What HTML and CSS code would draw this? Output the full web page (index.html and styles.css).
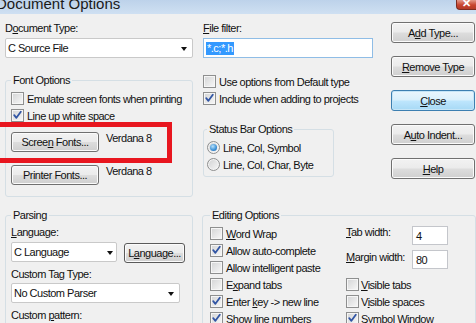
FILE: index.html
```html
<!DOCTYPE html>
<html>
<head>
<meta charset="utf-8">
<title>Document Options</title>
<link rel="stylesheet" href="styles.css">
</head>
<body>
<div class="titlebar"><span class="title">Document Options</span><span class="close">✕</span></div>

<div class="top">
  <div class="col-left">
    <div class="label">D<u>o</u>cument Type:</div>
    <div class="combo combo-doc"><span>C Source File</span><i class="arrow"></i></div>
    <fieldset class="group font-options">
      <legend>Font Options</legend>
      <div class="cbrow"><span class="cb"></span><span>Emulate screen fonts when printing</span></div>
      <div class="cbrow"><span class="cb"><svg viewBox="0 0 11 11" width="11" height="11"><path d="M2.2 5.2 L4.4 7.8 L8.8 1.8" fill="none" stroke="#3155a4" stroke-width="1.8" stroke-linecap="round" stroke-linejoin="round"/></svg></span><span>Line up white space</span></div>
      <div class="fontrow"><span class="btn btn-font"><span>Scree<u>n</u> Fonts...</span></span><span class="fontname">Verdana 8</span></div>
      <div class="fontrow second"><span class="btn btn-font"><span>Printer Fonts...</span></span><span class="fontname">Verdana 8</span></div>
    </fieldset>
  </div>

  <div class="col-mid">
    <div class="label"><u>F</u>ile filter:</div>
    <div class="textbox filter"><span class="sel">*.c;*.h</span></div>
    <div class="cbrow first-mid"><span class="cb"></span><span>Use options from Default type</span></div>
    <div class="cbrow"><span class="cb"><svg viewBox="0 0 11 11" width="11" height="11"><path d="M2.2 5.2 L4.4 7.8 L8.8 1.8" fill="none" stroke="#3155a4" stroke-width="1.8" stroke-linecap="round" stroke-linejoin="round"/></svg></span><span>Include when adding to projects</span></div>
    <fieldset class="group status">
      <legend>Status Bar Options</legend>
      <div class="cbrow"><span class="rb on"></span><span>Line, Col, S<u>y</u>mbol</span></div>
      <div class="cbrow"><span class="rb"></span><span>Line, Col, Char, Byte</span></div>
    </fieldset>
  </div>

  <div class="col-right">
    <span class="btn btn-side"><span>A<u>d</u>d Type...</span></span>
    <span class="btn btn-side"><span><u>R</u>emove Type</span></span>
    <span class="btn btn-side default"><span><u>C</u>lose</span></span>
    <span class="btn btn-side"><span>A<u>u</u>to Indent...</span></span>
    <span class="btn btn-side"><span><u>H</u>elp</span></span>
  </div>
</div>

<div class="bottom">
  <fieldset class="group parsing">
    <legend>Parsing</legend>
    <div class="label"><u>L</u>anguage:</div>
    <div class="langrow">
      <div class="combo combo-lang"><span>C Language</span><i class="arrow"></i></div>
      <span class="btn btn-lang"><span>L<u>a</u>nguage...</span></span>
    </div>
    <div class="label tag-label">Custom Tag Type:</div>
    <div class="combo combo-tag"><span>No Custom Parser</span><i class="arrow"></i></div>
    <div class="label pattern-label">Custom <u>p</u>attern:</div>
  </fieldset>

  <fieldset class="group editing">
    <legend>Editing Options</legend>
    <div class="edit-cols">
      <div class="edit-col1">
        <div class="cbrow"><span class="cb"></span><span><u>W</u>ord Wrap</span></div>
        <div class="cbrow"><span class="cb"><svg viewBox="0 0 11 11" width="11" height="11"><path d="M2.2 5.2 L4.4 7.8 L8.8 1.8" fill="none" stroke="#3155a4" stroke-width="1.8" stroke-linecap="round" stroke-linejoin="round"/></svg></span><span>Allow auto-complete</span></div>
        <div class="cbrow"><span class="cb"></span><span>Allow intelligent paste</span></div>
        <div class="cbrow"><span class="cb"></span><span>E<u>x</u>pand tabs</span></div>
        <div class="cbrow"><span class="cb"><svg viewBox="0 0 11 11" width="11" height="11"><path d="M2.2 5.2 L4.4 7.8 L8.8 1.8" fill="none" stroke="#3155a4" stroke-width="1.8" stroke-linecap="round" stroke-linejoin="round"/></svg></span><span>Enter <u>k</u>ey -&gt; new line</span></div>
        <div class="cbrow"><span class="cb"><svg viewBox="0 0 11 11" width="11" height="11"><path d="M2.2 5.2 L4.4 7.8 L8.8 1.8" fill="none" stroke="#3155a4" stroke-width="1.8" stroke-linecap="round" stroke-linejoin="round"/></svg></span><span>Show line numbers</span></div>
      </div>
      <div class="edit-col2">
        <div class="field tab-field"><span class="flabel"><u>T</u>ab width:</span><span class="textbox small">4</span></div>
        <div class="field margin-field"><span class="flabel"><u>M</u>argin width:</span><span class="textbox small">80</span></div>
        <div class="cbrow col2-first"><span class="cb"></span><span><u>V</u>isible tabs</span></div>
        <div class="cbrow"><span class="cb"></span><span>V<u>i</u>sible spaces</span></div>
        <div class="cbrow"><span class="cb"><svg viewBox="0 0 11 11" width="11" height="11"><path d="M2.2 5.2 L4.4 7.8 L8.8 1.8" fill="none" stroke="#3155a4" stroke-width="1.8" stroke-linecap="round" stroke-linejoin="round"/></svg></span><span><u>S</u>ymbol Window</span></div>
      </div>
    </div>
  </fieldset>
</div>

<div class="highlight"></div>
</body>
</html>
```

FILE: styles.css
```css
* { box-sizing: border-box; }
html, body { margin: 0; padding: 0; }
body {
  position: relative;
  width: 476px;
  height: 323px;
  overflow: hidden;
  background: #f0f0f0;
  font-family: "Liberation Sans", Arial, sans-serif;
  font-size: 11px;
  line-height: 14px;
  letter-spacing: -0.5px;
  color: #111;
}
u { text-decoration: underline; text-underline-offset: 1px; }

/* title bar */
.titlebar {
  height: 14px;
  display: flex;
  overflow: hidden;
  background: linear-gradient(#bdd2ea, #cfe0f2);
}
.title {
  font-size: 15px;
  line-height: 13px;
  letter-spacing: 0;
  margin: -3px 0 0 -4px;
  color: #1a1a1a;
}
.close {
  margin-left: auto;
  width: 20px;
  height: 10px;
  background: linear-gradient(#e39a8a, #c8452f 55%, #b53a26);
  border: 1px solid #7d2c20;
  border-top: 0;
  border-right: 0;
  border-radius: 0 0 0 4px;
  color: #fff;
  font-size: 11px;
  line-height: 6px;
  font-weight: bold;
  text-align: center;
  letter-spacing: 0;
}

/* generic */
.label { height: 14px; white-space: nowrap; }
.group {
  margin: 0;
  padding: 3px 0 0 5px;
  border: 1px solid #d5dfe5;
  border-radius: 3px;
  min-width: 0;
}
.group legend { padding: 0 2px; line-height: 14px; }

.cbrow { display: flex; align-items: center; height: 17px; gap: 3px; white-space: nowrap; }
.cb {
  flex: none;
  width: 13px;
  height: 13px;
  border: 1px solid #8e8f8f;
  background: linear-gradient(135deg, #d3d4d5, #f8f8f8);
  box-shadow: inset 0 0 0 1px #f6f6f6;
  display: flex;
  align-items: center;
  justify-content: center;
}
.cb svg { display: block; }
.rb {
  flex: none;
  width: 13px;
  height: 13px;
  border: 1px solid #8e8f8f;
  border-radius: 50%;
  background: linear-gradient(135deg, #d0d1d2, #f8f8f8);
  box-shadow: inset 0 0 0 1px #f4f4f4;
  display: flex;
  align-items: center;
  justify-content: center;
}
.rb.on::after {
  content: "";
  width: 7px;
  height: 7px;
  border-radius: 50%;
  background: radial-gradient(circle at 40% 35%, #b8e1fa, #3a8fd6 60%, #1d5fa8);
}

.btn {
  display: flex;
  align-items: center;
  justify-content: center;
  border: 1px solid #707070;
  border-radius: 3px;
  background: linear-gradient(#f2f2f2 0%, #ebebeb 48%, #dddddd 52%, #cfcfcf 100%);
  box-shadow: inset 0 0 0 1px #fbfbfb;
  white-space: nowrap;
}

.combo {
  display: flex;
  align-items: center;
  justify-content: space-between;
  height: 20px;
  background: #fff;
  border: 1px solid #c9c9c9;
  border-radius: 2px;
  padding: 0 5px 0 2px;
  white-space: nowrap;
}
.arrow {
  width: 0;
  height: 0;
  border-left: 3.5px solid transparent;
  border-right: 3.5px solid transparent;
  border-top: 4px solid #111;
  margin-top: 2px;
}
.textbox {
  display: flex;
  align-items: center;
  background: #fff;
  border: 1px solid #abadb3;
}

/* top section */
.top { display: flex; padding: 7px 0 0 5px; }
.col-left { width: 188px; flex: none; }
.combo-doc { margin-top: 3px; }
.font-options { margin-top: 15px; padding-bottom: 11px; }
.fontrow { display: flex; align-items: flex-start; gap: 7px; margin-top: 8px; }
.fontrow.second { margin-top: 13px; }
.btn-font { width: 88px; height: 20px; }
.fontname { margin-top: -1px; }

.col-mid { width: 170px; margin-left: 10px; flex: none; }
.filter {
  margin-top: 3px;
  height: 20px;
  border-color: #8fbde6;
  padding-left: 2px;
}
.sel {
  background: #3399ff;
  color: #fff;
  line-height: 13px;
  padding: 0 1px;
}
.first-mid { margin-top: 15px; }
.status { margin-top: 15px; width: 131px; padding: 3px 0 3px 3px; }

.col-right {
  width: 84px;
  margin-left: 18px;
  padding-top: 1px;
  flex: none;
  display: flex;
  flex-direction: column;
  gap: 13px;
}
.btn-side { height: 21px; }
.btn.default {
  border-color: #3c7fb1;
  background: linear-gradient(#eaf6fd 0%, #d9f0fc 48%, #bee6fd 52%, #a7d9f5 100%);
  box-shadow: inset 0 0 0 1px #c5e5f7;
}

/* bottom section */
.bottom { display: flex; padding-left: 5px; margin-top: 11px; }
.parsing { width: 188px; flex: none; padding-bottom: 0; }
.langrow { display: flex; align-items: flex-start; gap: 7px; margin-top: 3px; }
.combo-lang { width: 106px; padding-right: 3px; }
.btn-lang { width: 61px; height: 20px; margin-top: 1px; border-color: #5a5a5a; }
.tag-label { margin-top: 4px; }
.combo-tag { width: 169px; margin-top: 2px; }
.pattern-label { margin-top: 5px; }

.editing { width: 274px; margin-left: 9px; flex: none; padding: 3px 0 0 7px; }
.edit-cols { display: flex; }
.edit-col1 { width: 136px; flex: none; }
.edit-col2 { flex: none; }
.edit-col2 .cbrow { gap: 2px; }
.field { display: flex; align-items: flex-start; height: 19px; }
.flabel { width: 66px; white-space: nowrap; }
.tab-field { margin-top: 1px; }
.tab-field .flabel { margin-top: -1px; }
.margin-field { margin-top: 5px; }
.textbox.small { width: 36px; height: 19px; padding-left: 3px; border-color: #c4c6cb; }
.col2-first { margin-top: 7px; }

/* red annotation overlay */
.highlight {
  position: absolute;
  left: -6px;
  top: 122px;
  width: 178px;
  height: 41px;
  border: 5px solid #e8161f;
}
```
